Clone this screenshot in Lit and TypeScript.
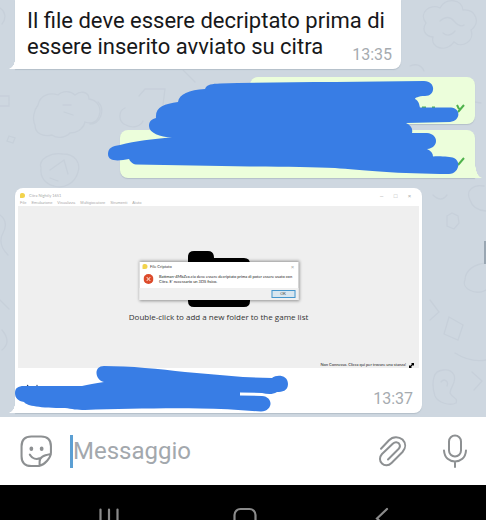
import { LitElement, html, css, svg } from "lit";
import { customElement } from "lit/decorators.js";

@customElement("wallpaper-doodles")
class WallpaperDoodles extends LitElement {
  static styles = css`
    :host { display: block; position: absolute; inset: 0; overflow: hidden; }
    .art { display: block; fill: none; stroke: #c7d0da; stroke-width: 1.3; stroke-linecap: round; }
  `;
  render() {
    const sprig = svg`<path d="M0 20C-8 10 4 0 14 5C20-6 36-4 37 7C50 6 55 20 45 27C49 38 36 46 28 39C20 50 4 45 7 34C-2 33-4 26 0 20ZM14 18q8-7 14 0t10 4M17 30q6 5 12-2"/>`;
    return html`<svg class="art" width="486" height="417" viewBox="0 0 486 417" aria-hidden="true">
      <path d="M38 105c2-10 12-13 20-10c5-5 13-4 17 0c6-5 14-3 14 4c9 1 13 10 10 17c-2 7-9 8-14 6c-2 8-9 11-15 11c-6 6-14 5-18 2c-10 2-17-2-17-10c-3-6-1-15 3-20ZM63 105h8M64 112l9 3"/>
      <path d="M41 168c-3-9 10-16 22-14c12 0 18 9 15 18c-3 12-15 17-24 14c-9-2-14-9-13-18ZM50 170l14-10l4 14M50 178l8 3"/>
      <path d="M125 108c-7 3-7 14 1 17c7 4 15 1 17-4M139 96l6-7h20l-2 16M98 102c8 8 2 22-8 22M0 96h9v10h-9M9 136l6 2l-2 5l-6-2zM183 70l12 12M0 8c5 3 7 10 2 16"/>
      <g transform="translate(426 3)">${sprig}</g>
      <path d="M410 66q10-4 14 5M456 80q12 8 7 20l18 3M447 216l5-3l6 3l1 7l-5 6l-7-3zM470 200c-5-10 4-16 14-14M470 200q3 10 16 11M433 195q8 8 14 0"/>
      <path d="M465 280c0-10 10-16 21-17M465 280c-4 8 10 16 21 10M430 300l9 12l-9 8M449 317l14 8l-5 15l-14-6z"/>
      <path d="M434 377c2-8 16-10 20-2c3 8-4 12-4 18c3 6 8 4 6 10c-6 3-18 0-21-7c-2-6-3-12-1-19ZM441 382c3-4 8-1 6 4M455 353q16 10 31 7M472 372l10 9l-8 9"/>
      <path d="M0 215q9 7 3 18t5 22M0 300l9 9M2 330q10 12 0 20"/>
    </svg>`;
  }
}

@customElement("citra-window")
class CitraWindow extends LitElement {
  static styles = css`
    :host { display: block; font-family: Lato, "Liberation Sans", sans-serif; }
    .title { display: flex; align-items: center; gap: 4px; height: 15px; padding: 0 7px 0 2px; box-sizing: border-box; font-size: 4px; line-height: 6px; color: #aaa; }
    .logo { flex: none; width: 5px; height: 5px; border-radius: 2px 3px 3px 1px; background: #f2d34c; }
    .controls { display: flex; gap: 9px; margin-left: auto; }
    .control { width: 5px; height: 6px; padding: 0; border: 0; background: none; color: #aaa; font: 6px/6px "Liberation Sans", Arial, sans-serif; display: grid; place-items: center; }
    .menu { display: flex; gap: 5px; padding: 0 2px; height: 6px; margin-top: -3px; font: 4px/6px "Liberation Sans", Arial, sans-serif; color: #a9a9a9; white-space: nowrap; }
    .stage { position: relative; display: flex; flex-direction: column; align-items: center; height: 162px; box-sizing: border-box; padding: 45px 5px 0; background: #efefef; }
    .folder { display: block; width: 62px; height: 56px; }
    .hint { margin: 4px 0 0; font: 8px/12px "Open Sans", "Noto Sans", sans-serif; color: #333; white-space: nowrap; }
    .status { display: flex; align-items: center; gap: 3px; margin: auto 0 0 auto; font-size: 4px; line-height: 6px; color: #222; }
    .dialog { position: absolute; top: 56px; left: 50%; transform: translateX(-50%); width: 159px; height: 38px; display: flex; flex-direction: column; background: #fff; box-shadow: 0 0 3px 1px rgba(0, 0, 0, 0.4); }
    .bar { display: flex; align-items: center; gap: 3px; height: 9px; padding: 0 3px; font-size: 4px; line-height: 6px; color: #333; }
    .body { display: flex; gap: 6px; flex: 1; padding: 3px 4px; }
    .error { flex: none; display: block; width: 10px; height: 10px; }
    .text { margin: 0; font-size: 4px; line-height: 5px; color: #222; white-space: nowrap; }
    .foot { display: flex; justify-content: flex-end; align-items: center; height: 12px; padding: 0 3px; background: #f0f0f0; }
    .ok { width: 24px; height: 8px; padding: 0; box-sizing: border-box; border: 1px solid #4596cc; background: #d8e6ef; color: #333; font: 4px/6px "Liberation Sans", Arial, sans-serif; }
  `;
  render() {
    return html`
      <div class="title">
        <span class="logo"></span><span>Citra Nightly 1651</span>
        <div class="controls">
          <button class="control" aria-label="Riduci">–</button>
          <button class="control" aria-label="Ingrandisci">□</button>
          <button class="control" aria-label="Chiudi">×</button>
        </div>
      </div>
      <div class="menu">
        <span>File</span><span>Emulazione</span><span>Visualizza</span><span>Multigiocatore</span><span>Strumenti</span><span>Aiuto</span>
      </div>
      <div class="stage">
        <svg class="folder" viewBox="0 0 62 56" aria-hidden="true">
          <path d="M0 6Q0 0 6 0H20Q26 0 26 7H56Q62 7 62 13V50Q62 56 56 56H6Q0 56 0 50Z" />
        </svg>
        <p class="hint">Double-click to add a new folder to the game list</p>
        <div class="status">
          <span>Non Connesso. Clicca qui per trovare una stanza!</span>
          <svg width="5" height="5" viewBox="0 0 5 5" aria-hidden="true"><path d="M2 0H5V3L4 2L2 4L3 5H0V2L1 3L3 1Z" /></svg>
        </div>
        <div class="dialog" role="dialog" aria-label="File Criptato">
          <div class="bar">
            <span class="logo"></span><span>File Criptato</span>
            <div class="controls"><button class="control" aria-label="Chiudi">×</button></div>
          </div>
          <div class="body">
            <svg class="error" viewBox="0 0 10 10" aria-hidden="true">
              <circle cx="5" cy="5" r="5" fill="#dc4a2a" />
              <path d="M3.2 3.2L6.8 6.8M6.8 3.2L3.2 6.8" stroke="#f7c3b2" stroke-width="1.2" />
            </svg>
            <p class="text">Battman-4MbZex.cia deve essere decriptato prima di poter essere usato con<br />Citra. E' necessario un 3DS fisico.</p>
          </div>
          <div class="foot"><button class="ok">OK</button></div>
        </div>
      </div>
    `;
  }
}

@customElement("app-root")
class AppRoot extends LitElement {
  static styles = css`
    :host { display: flex; flex-direction: column; min-height: 100vh; font-family: Roboto, sans-serif; background: #000; }
    .chat { position: relative; flex: none; padding: 0 11px 4px 15px; background: #ced7e0; }
    .thread { position: relative; display: flex; flex-direction: column; align-items: flex-start; }
    .bubble { position: relative; box-sizing: border-box; background: #fff; border-radius: 8px; box-shadow: 0 1px 1px #b4bfc9; }
    .in { border-bottom-left-radius: 0; }
    .in::before { content: ""; position: absolute; left: -7px; bottom: 0; width: 7px; height: 10px; background: radial-gradient(7px 10px at 0 0, transparent 96%, #fff 100%); }
    .first { padding: 8px 16px 9px 12px; border-top-left-radius: 0; border-top-right-radius: 0; }
    .message { margin: 0; font-size: 22px; line-height: 26px; color: #17181a; }
    .time { position: absolute; right: 9px; bottom: 5px; font-size: 16px; line-height: 19px; color: #a6abb0; }
    .sent { position: relative; align-self: stretch; display: flex; flex-direction: column; align-items: flex-end; gap: 6px; margin: 8px 0 10px; }
    .out { background: #ecfedb; }
    .short { width: 225px; height: 47px; }
    .long { width: 355px; height: 48px; border-bottom-right-radius: 0; }
    .long::after { content: ""; position: absolute; right: -7px; bottom: 0; width: 7px; height: 16px; background: radial-gradient(7px 16px at 100% 0, transparent 96%, #ecfedb 100%); }
    .scribble { position: absolute; display: block; fill: #387de5; }
    .over-sent { top: 0; right: 0; }
    .over-photo { left: 0; bottom: 0; }
    .tick { fill: none; stroke: #4fb24c; stroke-width: 2; }
    .photo { width: 88.5%; padding: 0 3px 45px; }
    .scroll { position: absolute; right: 0; top: 241px; width: 2px; height: 23px; background: #99a6b2; }
    .composer { display: flex; align-items: center; height: 68px; padding: 0 18px 0 20px; background: #fff; }
    .icon { flex: none; padding: 0; border: 0; background: none; color: #8d9092; display: grid; place-items: center; }
    .icon svg { display: block; fill: none; stroke: currentColor; stroke-width: 2; stroke-linecap: round; stroke-linejoin: round; }
    .field { flex: 1; min-width: 0; display: flex; align-items: center; margin: 0 12px 0 17px; }
    .caret { flex: none; width: 3px; height: 33px; background: #5b9fd3; }
    .input { flex: 1; min-width: 0; height: 36px; margin: 0; padding: 0; border: 0; outline: 0; background: none; font: 24px/32px Roboto, sans-serif; color: #17181a; }
    .input::placeholder { color: #a3a8ad; opacity: 1; }
    .mic { margin-left: 35px; }
    .nav { flex: 1; display: flex; min-height: 35px; box-sizing: border-box; padding: 22px 36px 0 41px; background: #000; }
    .key { flex: 1; height: 13px; padding: 0; border: 0; overflow: hidden; background: none; color: #8b8b8b; display: flex; justify-content: center; align-items: flex-start; }
    .key svg { display: block; flex: none; fill: none; stroke: currentColor; stroke-width: 2.2; stroke-linecap: round; }
  `;

  render() {
    return html`
      <main class="chat">
        <wallpaper-doodles></wallpaper-doodles>
        <div class="thread">
          <article class="bubble in first">
            <p class="message">Il file deve essere decriptato prima di<br />essere inserito avviato su citra</p>
            <time class="time">13:35</time>
          </article>

          <section class="sent">
            <article class="bubble out short"></article>
            <article class="bubble out long"></article>
            <svg class="scribble over-sent" width="370" height="101" viewBox="105 77 370 101" aria-hidden="true">
              <path class="tick" d="M464 105L458 112M457 105L459 109M464 158L458 165M422 107.500h4M432 107.500h3" />
              <path d="M108 154C108 148 112 146 120 145C136 141 152 139 172 137.500C160 137 149 133 149 126C149 121 152 119 156 118C155 107 164 104 178 102C179 94 189 90 205 89C207 84 212 84 220 83.500C280 82 350 82 424 81C436 81 436 96 425 96C418 96 415 98 415 99C419 101 419 104 420 107.500H451C461 108 461 121 450 122L406 123C411 125 413 129 412 133H427C439 134 439 148 427 149C431 151 433 153 433 156.500C442 156 450 157 454 158C462 162 458 174 449 174C400 174 360 170 335 168C315 167 286 167 250 166.500L136 164.500C132 164 130 161 129 159C119 161 108 162 108 154Z" />
            </svg>
          </section>

          <article class="bubble in photo">
            <citra-window></citra-window>
            <svg class="scribble over-photo" width="280" height="52" viewBox="15 361 280 52" aria-hidden="true">
              <path d="M26.500 386.500l1-2l1.500 2M36 386.500l1-2l1 2" fill="#17345f" />
              <path d="M15 393C15 388 18 386 24 386H82C88 385 95 383 104 382C95 380 93 366 104 366C130 366 160 369 185 372L243 377L272 378C277 374 288 375 288 384C288 391 282 392 277 392C272 395 267 394 262 393L240 392.500V395.500L262 396C274 397 273 411 261 411.500C240 410 220 408.500 200 408.500C160 408 120 409 85 410C77 410 72 409 65 408C40 408 27 406 24 402C18 401 15 398 15 393Z" />
            </svg>
            <time class="time">13:37</time>
          </article>
        </div>
        <div class="scroll"></div>
      </main>

      <form class="composer" @submit=${(e: Event) => e.preventDefault()}>
        <button class="icon" type="button" aria-label="Adesivi">
          <svg width="33" height="33" viewBox="0 0 32 32">
            <path d="M30 17V11Q30 1.500 20.500 1.500H11Q1.500 1.500 1.500 11V20.500Q1.500 30 11 30H18.500C24 29 30 22 30 17ZM19 29.500V26C19 21.500 22 20 30 18.500M9.500 19C12 23 16 24 19 22.500" />
            <path d="M11 13v.6M21 13v.6" stroke-width="3.600" />
          </svg>
        </button>
        <label class="field">
          <span class="caret"></span>
          <input class="input" type="text" placeholder="Messaggio" aria-label="Messaggio" />
        </label>
        <button class="icon" type="button" aria-label="Allega">
          <svg width="29" height="32" viewBox="-1 -1 29 32">
            <path d="M2 12.700L10 4.200C14 0 20 .5 23.500 3.500C27 7 27 12 23.500 16L12.500 27C9.500 30 5.500 30 3 27.500C.3 25 .3 21 3 18L14 7.500C16 5.500 18.500 6 19.800 7.300C21.300 9 21.300 11 19.500 13L9 23.500" />
          </svg>
        </button>
        <button class="icon mic" type="button" aria-label="Messaggio vocale">
          <svg width="26" height="34" viewBox="0 0 25 34">
            <rect x="6.500" y="1.500" width="12" height="21" rx="6" />
            <path d="M1.500 16.500C2 24 7 27.500 12.500 27.500S23 24 23.500 16.500M12.500 27.500V33" />
          </svg>
        </button>
      </form>

      <nav class="nav">
        <button class="key" aria-label="Recenti">
          <svg width="20" height="22" viewBox="0 0 20 22"><path d="M1.500 2.500V20M10 2.500V20M18.500 2.500V20" /></svg>
        </button>
        <button class="key" aria-label="Home">
          <svg width="24" height="24" viewBox="0 0 24 24"><rect x="1.500" y="2" width="21" height="20" rx="6" /></svg>
        </button>
        <button class="key" aria-label="Indietro">
          <svg width="14" height="22" viewBox="0 0 14 22"><path d="M12 2L2 11.500L12 21" /></svg>
        </button>
      </nav>
    `;
  }
}
